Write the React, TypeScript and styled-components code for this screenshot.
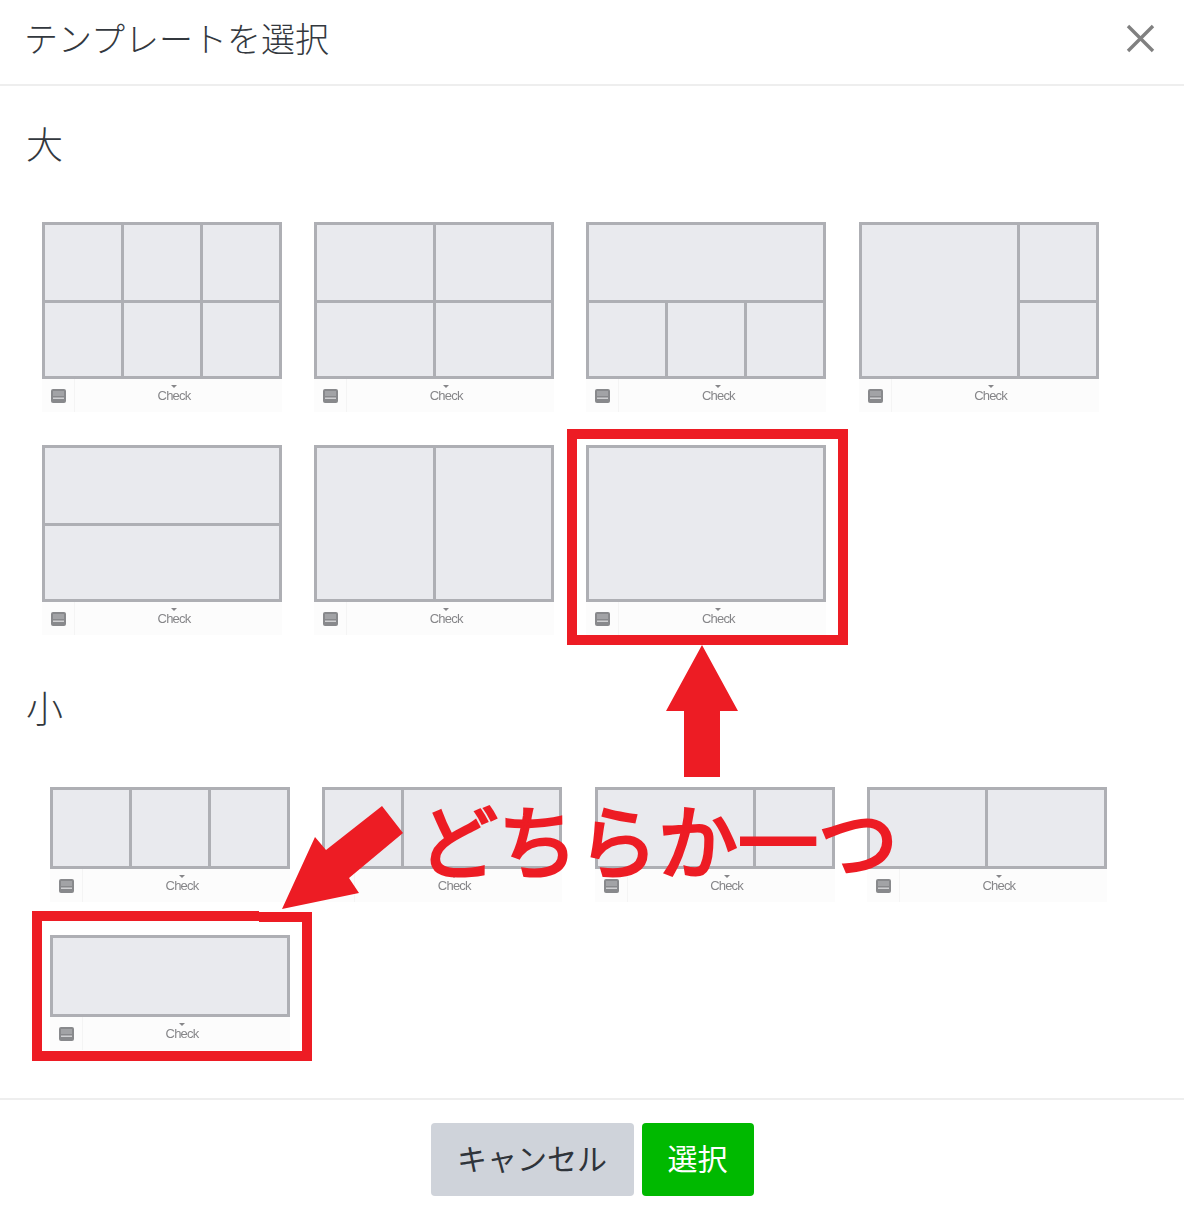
import React from 'react';
import styled, { createGlobalStyle } from 'styled-components';

const GlobalStyle = createGlobalStyle`
  html, body {
    margin: 0;
    padding: 0;
    background: #fff;
  }
  body {
    font-family: "Noto Sans CJK JP", "Noto Sans", sans-serif;
    color: #33383e;
  }
`;

const Dialog = styled.div`
  position: relative;
  width: 1184px;
  height: 1220px;
  overflow: hidden;
  background: #fff;
`;

const Header = styled.header`
  height: 84px;
  border-bottom: 2px solid #eeeeee;
  padding: 0 28px 0 24px;
  display: flex;
  align-items: center;
  justify-content: space-between;
`;

const Title = styled.h1`
  margin: -8px 0 0;
  font-size: 34px;
  font-weight: 300;
  line-height: 1.4;
  color: #33383e;
`;

const CloseButton = styled.button`
  border: 0;
  background: none;
  padding: 0;
  margin: -8px 1px 0 0;
  width: 29px;
  height: 29px;
  display: flex;
  color: #808080;
`;

const Body = styled.main`
  display: flow-root;
  padding: 0 26px;
  height: 1012px;
  box-sizing: border-box;
`;

const SectionLabel = styled.h2<{ $top: number; $bottom: number }>`
  margin: ${p => p.$top}px 0 ${p => p.$bottom}px;
  font-size: 37px;
  font-weight: 300;
  line-height: 52px;
  color: #33383e;
`;

const ThumbGrid = styled.div<{ $indent: number; $gap: number }>`
  display: grid;
  grid-template-columns: repeat(4, 240px);
  column-gap: ${p => p.$gap}px;
  row-gap: 33px;
  margin-left: ${p => p.$indent}px;
`;

const Thumb = styled.div`
  position: relative;
  width: 240px;
  display: flex;
  flex-direction: column;
`;

const Frame = styled.div<{ $height: number; $rows: number }>`
  height: ${p => p.$height}px;
  box-sizing: border-box;
  display: grid;
  grid-template-columns: repeat(6, 1fr);
  grid-template-rows: ${p => (p.$rows === 2 ? '75fr 73fr' : '1fr')};
  gap: 3px;
  border: 3px solid #aeafb4;
  background: #aeafb4;
  filter: blur(0.3px);
`;

const Cell = styled.div<{ $cols: number; $rows?: number }>`
  grid-column: span ${p => p.$cols};
  grid-row: span ${p => p.$rows ?? 1};
  background: #e9eaee;
`;

const Toolbar = styled.div`
  height: 33px;
  display: flex;
  background: #fcfcfc;
  filter: blur(0.6px);
`;

const IconSlot = styled.div`
  width: 32px;
  border-right: 1px solid #f4f4f4;
  display: flex;
  align-items: center;
  justify-content: center;
  svg {
    margin-left: 1px;
  }
`;

const CheckLabel = styled.div`
  position: relative;
  flex: 1;
  padding-right: 9px;
  text-align: center;
  font-family: "Liberation Sans", Arial, sans-serif;
  font-size: 13px;
  line-height: 33px;
  letter-spacing: -0.8px;
  color: #868689;

  &::before {
    content: "";
    position: absolute;
    left: calc(50% - 4.5px);
    top: 6px;
    margin-left: -3px;
    border-left: 3px solid transparent;
    border-right: 3px solid transparent;
    border-top: 3px solid #868689;
  }
`;

const Highlight = styled.div<{ $l: number; $t: number; $r: number; $b: number; $notch?: number }>`
  position: absolute;
  left: ${p => p.$l}px;
  top: ${p => p.$t}px;
  right: ${p => p.$r}px;
  bottom: ${p => p.$b}px;
  border: 10px solid #ed1c24;
  pointer-events: none;

  ${p =>
    p.$notch
      ? `
    &::before, &::after {
      content: "";
      position: absolute;
      left: ${p.$notch}px;
      right: -10px;
      height: 1px;
    }
    &::before { top: -10px; background: #fff; }
    &::after { top: 0; background: #ed1c24; }
  `
      : ''}
`;

const Footer = styled.footer`
  border-top: 2px solid #eeeeee;
  padding-top: 23px;
  display: flex;
  justify-content: center;
  gap: 8px;
`;

const Button = styled.button<{ $primary?: boolean }>`
  width: ${p => (p.$primary ? 112 : 203)}px;
  height: 73px;
  border: 0;
  border-radius: 4px;
  padding: 0 0 6px;
  font-family: inherit;
  font-size: 30px;
  font-weight: 400;
  background: ${p => (p.$primary ? '#00b900' : '#cfd3da')};
  color: ${p => (p.$primary ? '#ffffff' : '#2f343a')};
`;

const Arrows = styled.svg`
  position: absolute;
  left: 0;
  top: 0;
  pointer-events: none;
`;

const Callout = styled.div`
  position: absolute;
  left: 418px;
  top: 781px;
  font-size: 80px;
  line-height: 112px;
  font-weight: 400;
  color: #ed1c24;
  -webkit-text-stroke: 3px #ed1c24;
  white-space: nowrap;
`;

type CellDef = { c: number; r?: number };

interface TemplateThumbProps {
  cells: CellDef[];
  rows: number;
  height: number;
  children?: React.ReactNode;
}

const BarIcon = () => (
  <svg width="15" height="14" viewBox="0 0 15 14">
    <rect width="15" height="14" rx="2" fill="#88898c" />
    <rect x="2" y="2" width="11" height="5" fill="#a2a3a6" />
    <rect x="2" y="8.5" width="11" height="1.5" fill="#cfd0d2" />
  </svg>
);

const TemplateThumb = ({ cells, rows, height, children }: TemplateThumbProps) => (
  <Thumb>
    <Frame $height={height} $rows={rows}>
      {cells.map((cell, i) => (
        <Cell key={i} $cols={cell.c} $rows={cell.r} />
      ))}
    </Frame>
    <Toolbar>
      <IconSlot>
        <BarIcon />
      </IconSlot>
      <CheckLabel>Check</CheckLabel>
    </Toolbar>
    {children}
  </Thumb>
);

const each = (...spans: number[]): CellDef[] => spans.map(c => ({ c }));

export default function App() {
  return (
    <Dialog>
      <GlobalStyle />
      <Header>
        <Title>テンプレートを選択</Title>
        <CloseButton aria-label="close">
          <svg width="29" height="29" viewBox="0 0 29 29">
            <path d="M2 2 L27 27 M27 2 L2 27" stroke="currentColor" strokeWidth="3.4" fill="none" />
          </svg>
        </CloseButton>
      </Header>
      <Body>
        <SectionLabel $top={31} $bottom={53}>大</SectionLabel>
        <ThumbGrid $indent={16} $gap={32.2}>
          <TemplateThumb rows={2} height={157} cells={each(2, 2, 2, 2, 2, 2)} />
          <TemplateThumb rows={2} height={157} cells={each(3, 3, 3, 3)} />
          <TemplateThumb rows={2} height={157} cells={each(6, 2, 2, 2)} />
          <TemplateThumb rows={2} height={157} cells={[{ c: 4, r: 2 }, { c: 2 }, { c: 2 }]} />
          <TemplateThumb rows={2} height={157} cells={each(6, 6)} />
          <TemplateThumb rows={1} height={157} cells={each(3, 3)} />
          <TemplateThumb rows={1} height={157} cells={each(6)}>
            <Highlight $l={-19} $t={-16} $r={-22} $b={-10} />
          </TemplateThumb>
        </ThumbGrid>
        <SectionLabel $top={46} $bottom={54}>小</SectionLabel>
        <ThumbGrid $indent={24} $gap={32.3}>
          <TemplateThumb rows={1} height={82} cells={each(2, 2, 2)} />
          <TemplateThumb rows={1} height={82} cells={each(2, 4)} />
          <TemplateThumb rows={1} height={82} cells={each(4, 2)} />
          <TemplateThumb rows={1} height={82} cells={each(3, 3)} />
          <TemplateThumb rows={1} height={82} cells={each(6)}>
            <Highlight $l={-18} $t={-24} $r={-22} $b={-11} $notch={217} />
          </TemplateThumb>
        </ThumbGrid>
      </Body>
      <Footer>
        <Button>キャンセル</Button>
        <Button $primary>選択</Button>
      </Footer>
      <Arrows width="1184" height="1220" viewBox="0 0 1184 1220">
        <polygon fill="#ed1c24" points="702,645 738,711 720,711 720,777 684,777 684,711 666,711" />
        <polygon fill="#ed1c24" points="382,806 403,833 349,878 359,893 282,909 315,837 326,850" />
      </Arrows>
      <Callout>どちらか一つ</Callout>
    </Dialog>
  );
}
